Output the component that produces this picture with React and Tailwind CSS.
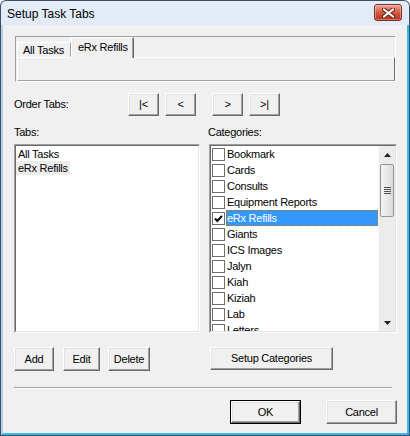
import React from 'react';

const FONT = "font-['Liberation_Sans',Arial,sans-serif]";

// Classic raised 3D edge used by every push button
const RAISED =
  'bg-[#f0f0f0] border border-t-white border-l-white border-r-[#696969] border-b-[#696969] shadow-[inset_-1px_-1px_0_#a0a0a0,inset_1px_1px_0_#e3e3e3]';

const CATEGORIES = [
  'Bookmark',
  'Cards',
  'Consults',
  'Equipment Reports',
  'eRx Refills',
  'Giants',
  'ICS Images',
  'Jalyn',
  'Kiah',
  'Kiziah',
  'Lab',
  'Letters',
];

function Button({ className, children }) {
  return (
    <div className={`${RAISED} flex items-center justify-center text-[11px] text-black ${className}`}>
      {children}
    </div>
  );
}

function Sunken({ className, children }) {
  return (
    <div className={`border border-t-[#a0a0a0] border-l-[#a0a0a0] border-r-white border-b-white ${className}`}>
      <div className="h-full border border-t-[#696969] border-l-[#696969] border-r-[#e3e3e3] border-b-[#e3e3e3] bg-white overflow-hidden">
        {children}
      </div>
    </div>
  );
}

function CheckBox({ checked }) {
  return (
    <div className="w-[13px] h-[13px] border border-[#6f6f6f] bg-white flex items-center justify-center flex-shrink-0">
      {checked && (
        <svg width="11" height="11" viewBox="0 0 11 11">
          <path d="M2 5.5 L4.3 8 L9 2.8" fill="none" stroke="#000" strokeWidth="2" />
        </svg>
      )}
    </div>
  );
}

function ScrollBar() {
  return (
    <div className="w-[17px] h-full flex flex-col bg-[#ececec] border-l border-[#f7f7f7] flex-shrink-0">
      <div className="h-[17px] flex items-center justify-center">
        <svg width="7" height="4" viewBox="0 0 7 4">
          <path d="M0 4 L3.5 0 L7 4 Z" fill="#222" />
        </svg>
      </div>
      <div className="flex-1 pt-px px-px">
        <div className="h-[53px] rounded-[2px] border border-[#959595] bg-gradient-to-r from-[#f4f4f4] to-[#dadada] flex flex-col items-center justify-center gap-px">
          <div className="w-[7px] h-px bg-[#555]" />
          <div className="w-[7px] h-px bg-[#555]" />
          <div className="w-[7px] h-px bg-[#555]" />
          <div className="w-[7px] h-px bg-[#555]" />
        </div>
      </div>
      <div className="h-[17px] flex items-center justify-center">
        <svg width="7" height="4" viewBox="0 0 7 4">
          <path d="M0 0 L7 0 L3.5 4 Z" fill="#222" />
        </svg>
      </div>
    </div>
  );
}

export default function App() {
  return (
    <div className={`w-[410px] h-[436px] bg-[#3f4f62] p-px rounded-t-[6px] ${FONT}`}>
      <div className="h-full flex flex-col rounded-t-[5px] bg-gradient-to-b from-[#e3ecf7] to-[#c8d8ed]">
        {/* Title bar */}
        <div className="h-[24px] flex items-start justify-between pl-[6px] pr-[7px] flex-shrink-0">
          <span className="text-[12px] leading-[14px] mt-[6px] text-black">Setup Task Tabs</span>
          <div className="mt-[3px] w-[28px] h-[17px] rounded-[3px] border border-[#7a2d22] bg-gradient-to-b from-[#eba493] via-[#d35a43] to-[#b52d17] flex items-center justify-center shadow-[inset_0_0_0_1px_rgba(255,255,255,0.35)]">
            <svg width="13" height="10" viewBox="0 0 13 10">
              <path d="M2 1.5 L11 8.5 M11 1.5 L2 8.5" stroke="#5b1c12" strokeWidth="4" strokeLinecap="square" />
              <path d="M2 1.5 L11 8.5 M11 1.5 L2 8.5" stroke="#fff" strokeWidth="2" strokeLinecap="square" />
            </svg>
          </div>
        </div>

        {/* Client area */}
        <div className="flex-1 bg-[#f0f0f0] border-l-2 border-l-[#b8cfe8] border-r-2 border-r-[#3cb6e8] border-b-2 border-b-[#3cb6e8] pl-[11px] flex flex-col text-[11px] tracking-[-0.25px] text-black">
          {/* Tab strip */}
          <div className="ml-px mt-[11px] w-[381px] h-[46px] border border-t-[#a0a0a0] border-l-[#a0a0a0] border-r-white border-b-white flex flex-col">
            <div className="h-[20px] pl-px flex items-end">
              <div className="w-[54px] h-[15px] border-t border-l border-white border-r border-r-[#a0a0a0] pl-[5px] flex items-center leading-[13px]">
                All Tasks
              </div>
              <div className="relative z-10 -mb-px w-[63px] h-[21px] bg-[#f0f0f0] border-t border-l border-white border-r border-r-[#696969] shadow-[inset_-1px_0_0_#a0a0a0] pl-[6px] pt-[3px] leading-[13px]">
                eRx Refills
              </div>
            </div>
            <div className="ml-px w-[378px] h-[24px] border border-t-white border-l-white border-r-[#696969] border-b-[#a0a0a0]" />
          </div>

          {/* Order tabs */}
          <div className="mt-[11px] h-[23px] flex items-center">
            <span className="w-[114px]">Order Tabs:</span>
            <Button className="w-[31px] h-[23px]">|&lt;</Button>
            <Button className="ml-[6px] w-[31px] h-[23px]">&lt;</Button>
            <Button className="ml-[16px] w-[31px] h-[23px]">&gt;</Button>
            <Button className="ml-[6px] w-[31px] h-[23px]">&gt;|</Button>
          </div>

          {/* Labels */}
          <div className="mt-[10px] h-[13px] flex leading-[13px]">
            <span className="w-[194px]">Tabs:</span>
            <span>Categories:</span>
          </div>

          {/* Lists */}
          <div className="mt-[5px] flex gap-[9px]">
            <Sunken className="w-[186px] h-[189px]">
              <div className="pt-px flex flex-col items-start">
                <div className="h-[14px] px-[2px] flex items-center">All Tasks</div>
                <div className="h-[14px] px-[2px] flex items-center bg-[#ececec]">eRx Refills</div>
              </div>
            </Sunken>
            <Sunken className="w-[188px] h-[189px]">
              <div className="h-full flex">
                <div className="flex-1 flex flex-col overflow-hidden">
                  {CATEGORIES.map((c) => {
                    const sel = c === 'eRx Refills';
                    return (
                      <div key={c} className="h-[16px] flex items-center pl-px flex-shrink-0">
                        <CheckBox checked={sel} />
                        {sel ? (
                          <div className="ml-px flex-1 h-[16px] bg-[#3399ff] text-white border border-dotted border-[#c2691c] flex items-center">
                            {c}
                          </div>
                        ) : (
                          <div className="ml-[2px] flex-1 h-[16px] flex items-center">{c}</div>
                        )}
                      </div>
                    );
                  })}
                </div>
                <ScrollBar />
              </div>
            </Sunken>
          </div>

          {/* List actions */}
          <div className="mt-[14px] flex items-start">
            <Button className="w-[40px] h-[24px]">Add</Button>
            <Button className="ml-[9px] w-[37px] h-[24px]">Edit</Button>
            <Button className="ml-[8px] w-[42px] h-[24px]">Delete</Button>
            <Button className="ml-[60px] w-[123px] h-[23px]">Setup Categories</Button>
          </div>

          {/* Separator */}
          <div className="mt-[16px] w-[378px] h-[2px] border-t border-[#a0a0a0] border-b border-b-white" />

          {/* Dialog buttons */}
          <div className="mt-[11px] flex">
            <div className="ml-[216px] w-[71px] h-[24px] border border-black flex">
              <Button className="flex-1">OK</Button>
            </div>
            <Button className="ml-[25px] w-[71px] h-[24px]">Cancel</Button>
          </div>
        </div>
      </div>
    </div>
  );
}
